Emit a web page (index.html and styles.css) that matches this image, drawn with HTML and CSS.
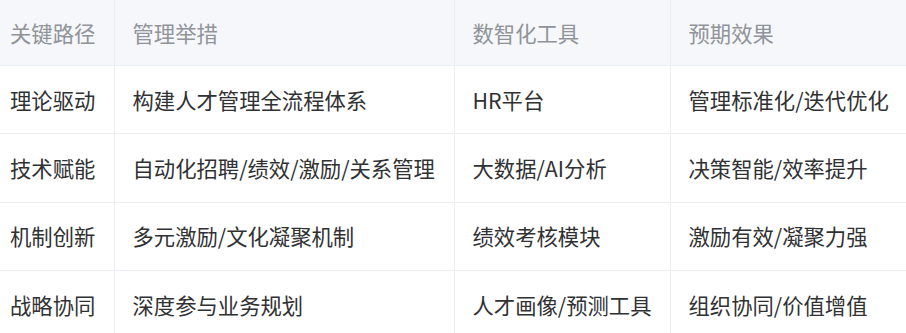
FILE: index.html
```html
<!DOCTYPE html>
<html lang="zh-CN">
<head>
<meta charset="utf-8">
<link rel="stylesheet" href="styles.css">
</head>
<body>
<table class="grid">
  <colgroup>
    <col class="c1"><col class="c2"><col class="c3"><col class="c4">
  </colgroup>
  <thead>
    <tr><th>关键路径</th><th>管理举措</th><th>数智化工具</th><th>预期效果</th></tr>
  </thead>
  <tbody>
    <tr><td>理论驱动</td><td>构建人才管理全流程体系</td><td>HR平台</td><td>管理标准化/迭代优化</td></tr>
    <tr><td>技术赋能</td><td>自动化招聘/绩效/激励/关系管理</td><td>大数据/AI分析</td><td>决策智能/效率提升</td></tr>
    <tr><td>机制创新</td><td>多元激励/文化凝聚机制</td><td>绩效考核模块</td><td>激励有效/凝聚力强</td></tr>
    <tr><td>战略协同</td><td>深度参与业务规划</td><td>人才画像/预测工具</td><td>组织协同/价值增值</td></tr>
  </tbody>
</table>
</body>
</html>
```

FILE: styles.css
```css
html, body {
  margin: 0;
  padding: 0;
  background: #ffffff;
}
body {
  font-family: "Noto Sans CJK SC", "Noto Sans", sans-serif;
  font-size: 21.33px;
  overflow: hidden;
}
.grid {
  width: 100%;
  border-collapse: separate;
  border-spacing: 0;
  table-layout: fixed;
}
.c1 { width: 115px; }
.c2 { width: 340px; }
.c3 { width: 216px; }
.grid th,
.grid td {
  box-sizing: border-box;
  text-align: left;
  vertical-align: middle;
  padding: 0 0 0 17.5px;
  border-right: 1px solid #ebeef5;
  border-bottom: 1px solid #ebeef5;
  white-space: nowrap;
  line-height: 1.4;
}
.grid th {
  height: 66px;
  background: #f5f7fa;
  color: #909399;
  font-weight: 400;
}
.grid td {
  height: 68.33px;
  color: #303133;
}
.grid th:first-child,
.grid td:first-child {
  padding-left: 10px;
}
.grid th:last-child,
.grid td:last-child {
  border-right: none;
}
```
